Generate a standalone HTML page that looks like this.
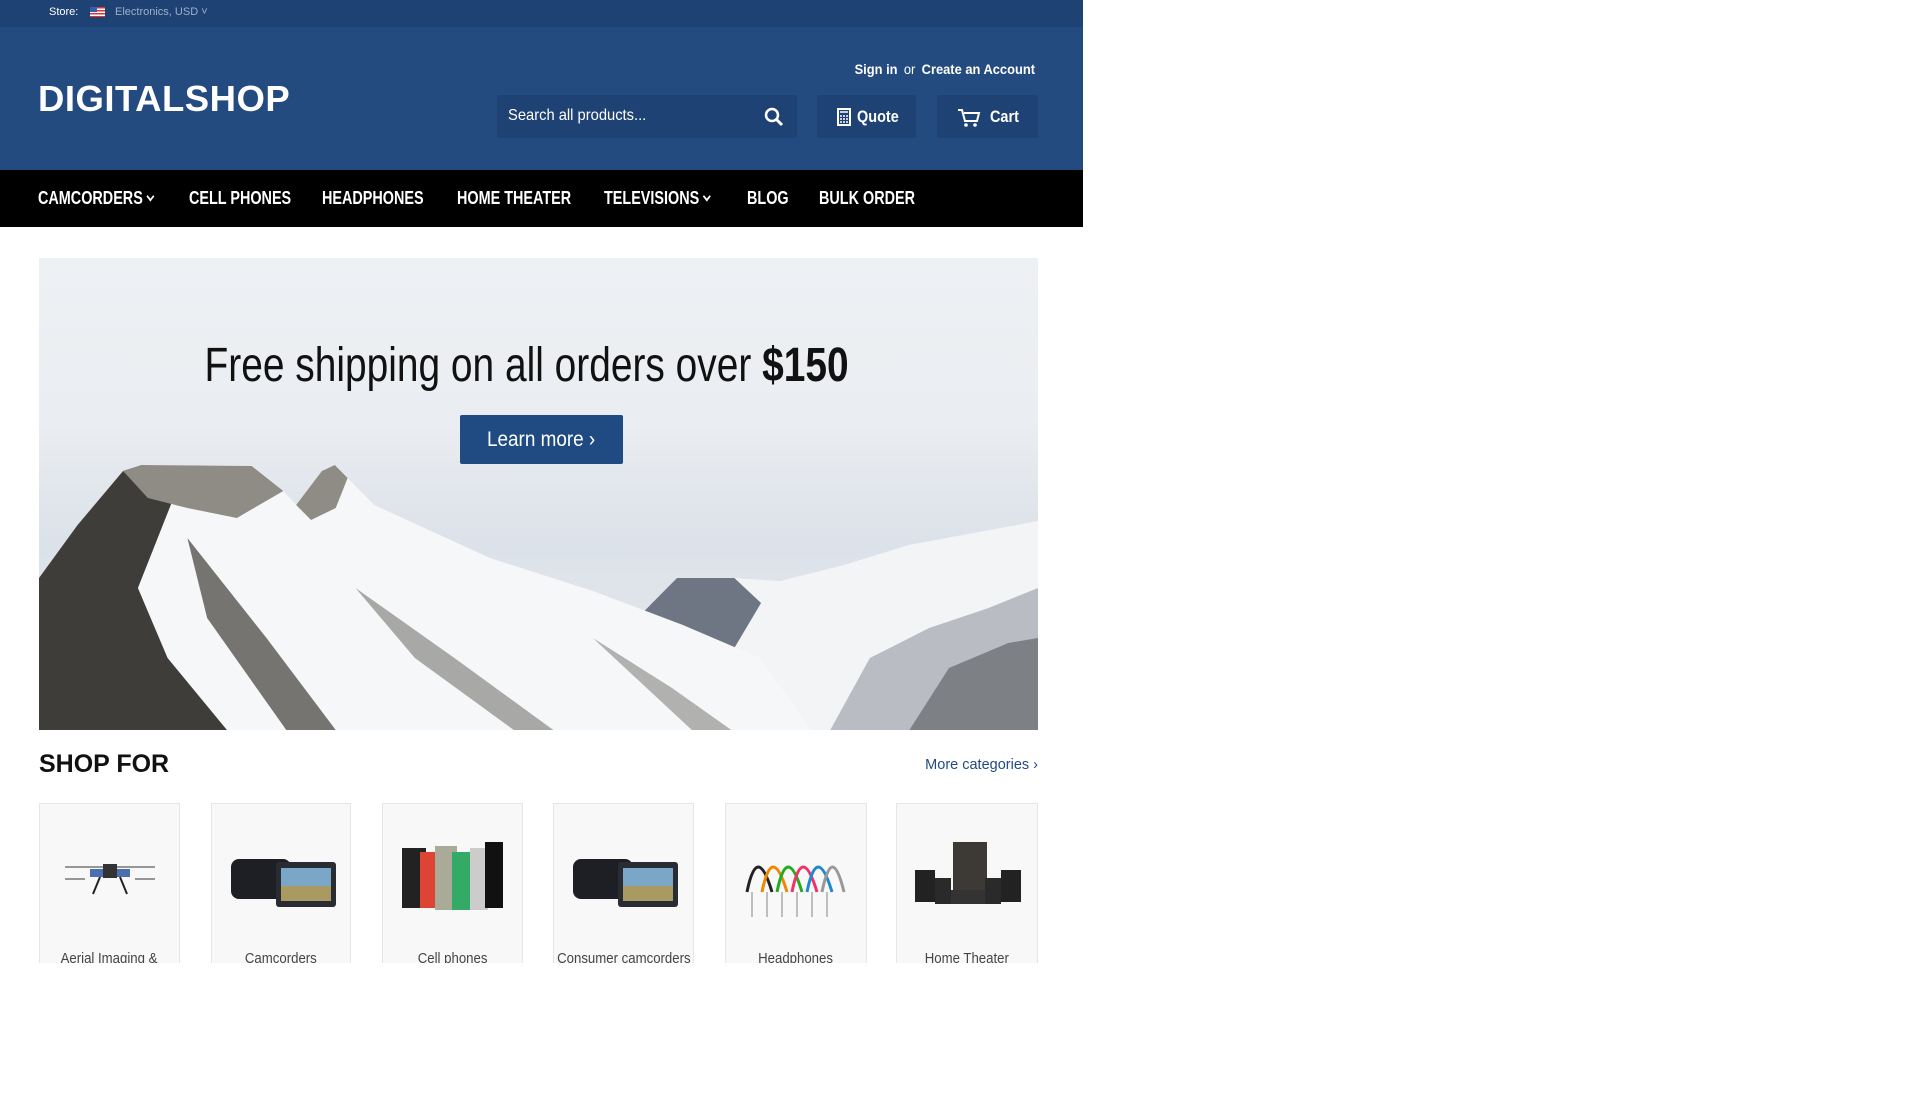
<!DOCTYPE html>
<html><head><meta charset="utf-8"><style>
*{margin:0;padding:0;box-sizing:border-box}
body{width:1920px;height:1106px;background:#fff;font-family:"Liberation Sans",sans-serif;overflow:hidden;position:relative}
.a{position:absolute}
.top{left:0;top:0;width:1083px;height:27px;background:#1f4274}
.hdr{left:0;top:27px;width:1083px;height:143px;background:#234b80}
.nav{left:0;top:170px;width:1083px;height:57px;background:#000}
.nav span{position:absolute;top:18px;color:#fff;font-weight:bold;font-size:18px;transform:scaleX(0.8);transform-origin:left;white-space:nowrap}
.chev{display:inline-block;width:7px;height:7px;border-right:2px solid #fff;border-bottom:2px solid #fff;transform:rotate(45deg);margin-left:6px;position:relative;top:-4px}
.btn{background:#1f4274;border-radius:2px;color:#fff;font-size:17px}
.card{top:803px;height:160px;background:#f8f8f8;border:1px solid #e6e6e6;border-bottom:none;overflow:hidden}
.card div{position:absolute;top:146px;left:-20px;right:-20px;text-align:center;white-space:nowrap}
.card div span{display:inline-block;font-size:15px;color:#444;transform:scaleX(0.88)}
</style></head><body>
<div class="a top"></div>
<div class="a" style="left:49px;top:6px;font-size:11px;color:#fff">Store:</div>
<div class="a" style="left:90px;top:7px;width:15px;height:10px;background:repeating-linear-gradient(#d33 0 1.5px,#fff 1.5px 3px)"><div style="width:7px;height:5px;background:#3a5bb0"></div></div>
<div class="a" style="left:115px;top:6px;font-size:11px;color:#9fb0c8">Electronics, USD ˅</div>
<div class="a hdr"></div>
<div class="a" style="left:38px;top:78px;font-weight:bold;font-size:36.5px;color:#fff;letter-spacing:0.5px">DIGITALSHOP</div>
<div class="a" style="left:780px;width:255px;text-align:right;top:61px;font-size:14px;color:#fff;font-weight:bold;transform:scaleX(0.92);transform-origin:right">Sign in <span style="font-weight:normal;margin:0 3px">or</span> Create an Account</div>
<div class="a btn" style="left:497px;top:95px;width:300px;height:43px"><span style="position:absolute;left:11px;top:12px;font-size:16px;transform:scaleX(0.92);transform-origin:left;white-space:nowrap">Search all products...</span>
<svg style="position:absolute;right:13px;top:12px" width="20" height="20" viewBox="0 0 20 20"><circle cx="8" cy="8" r="6" fill="none" stroke="#fff" stroke-width="2.5"/><path d="M12 12l6 6" stroke="#fff" stroke-width="3"/></svg></div>
<div class="a btn" style="left:817px;top:95px;width:99px;height:43px"><svg style="position:absolute;left:20px;top:13px" width="14" height="18" viewBox="0 0 14 18"><rect x="1" y="1" width="12" height="16" fill="none" stroke="#fff" stroke-width="2"/><path d="M3 4h8M3 8h2M6 8h2M9 8h2M3 11h2M6 11h2M9 11h2M3 14h2M6 14h2M9 14h2" stroke="#fff" stroke-width="1.5"/></svg><span style="position:absolute;left:40px;top:12px;font-weight:bold;transform:scaleX(0.85);transform-origin:left">Quote</span></div>
<div class="a btn" style="left:937px;top:95px;width:101px;height:43px"><svg style="position:absolute;left:20px;top:13px" width="24" height="20" viewBox="0 0 24 20"><path d="M1 2h4l3 11h12l2-8H7" fill="none" stroke="#fff" stroke-width="2"/><circle cx="9" cy="17" r="1.8" fill="#fff"/><circle cx="18" cy="17" r="1.8" fill="#fff"/></svg><span style="position:absolute;left:53px;top:12px;font-weight:bold;transform:scaleX(0.85);transform-origin:left">Cart</span></div>
<div class="a nav">
<span style="left:38px">CAMCORDERS<i class="chev"></i></span><span style="left:189px">CELL PHONES</span><span style="left:322px">HEADPHONES</span><span style="left:457px">HOME THEATER</span><span style="left:604px">TELEVISIONS<i class="chev"></i></span><span style="left:747px">BLOG</span><span style="left:819px">BULK ORDER</span></div>
<div class="a" style="left:39px;top:258px;width:999px;height:472px;overflow:hidden;background:linear-gradient(#eef1f4,#eaedf1 35%,#dce2e9 60%,#e6eaef)">
<svg width="999" height="472" viewBox="0 0 1010 472" preserveAspectRatio="none" style="position:absolute;left:0;top:0">
<path d="M560 472 L612 353 L645 320 L703 320 L749 323 L814 307 L879 287 L1010 263 L1010 472Z" fill="#f2f4f6"/>
<path d="M612 353 L645 320 L703 320 L730 345 L700 395 L660 400Z" fill="#6e7683"/>
<path d="M800 472 L840 400 L900 370 L960 350 L1010 330 L1010 472Z" fill="#8a9099" opacity="0.55"/>
<path d="M0 320 L39 267 L85 213 L104 207 L215 208 L247 233 L260 247 L286 213 L299 207 L312 220 L339 247 L456 300 L560 333 L651 367 L729 400 L781 472 L0 472Z" fill="#f6f7f8"/>
<path d="M0 320 L39 267 L85 213 L104 207 L140 230 L120 280 L100 330 L130 400 L190 472 L0 472Z" fill="#3f3d3a"/>
<path d="M85 213 L104 207 L215 208 L247 233 L200 260 L150 250 L110 240Z" fill="#8f8c86"/>
<path d="M260 247 L286 213 L299 207 L312 220 L300 250 L275 262Z" fill="#8f8c86"/>
<path d="M150 280 L230 380 L300 472 L250 472 L170 360Z" fill="#4a4844" opacity="0.75"/>
<path d="M320 330 L420 400 L520 472 L480 472 L380 400Z" fill="#4a4844" opacity="0.45"/>
<path d="M560 380 L640 430 L700 472 L660 472Z" fill="#4a4844" opacity="0.4"/>
<path d="M880 472 L920 410 L980 385 L1010 380 L1010 472Z" fill="#55595e" opacity="0.6"/>
</svg>
<div style="position:absolute;left:-100px;right:-76px;top:80px;text-align:center;white-space:nowrap"><span style="display:inline-block;font-size:48px;color:#111;transform:scaleX(0.81)">Free shipping on all orders over <b>$150</b></span></div>
<div style="position:absolute;left:421px;top:157px;width:163px;height:49px;background:#1f4a82;color:#fff;text-align:center;line-height:49px;border-radius:2px"><span style="display:inline-block;font-size:21px;transform:scaleX(0.9)">Learn more ›</span></div>
</div>
<div class="a" style="left:39px;top:750px;font-weight:bold;font-size:25px;color:#111">SHOP FOR</div>
<div class="a" style="left:866px;top:757px;width:172px;text-align:right;font-size:14.5px;color:#234b80">More categories ›</div>
<div class="a card" style="left:39px;width:141px"><svg style="position:absolute;left:15px;top:45px" width="110" height="50"><path d="M10 18h40M60 18h40M10 30h20M80 30h20" stroke="#777" stroke-width="1.5"/><rect x="35" y="20" width="40" height="8" fill="#4a6fb0"/><path d="M45 28 L38 45 M65 28 L72 45" stroke="#222" stroke-width="2"/><rect x="48" y="15" width="14" height="14" fill="#333"/></svg><div><span>Aerial Imaging &amp;</span></div></div>
<div class="a card" style="left:211px;width:140px"><svg style="position:absolute;left:14px;top:40px" width="115" height="70"><rect x="5" y="15" width="60" height="40" rx="8" fill="#1e1f24"/><rect x="50" y="18" width="60" height="45" rx="3" fill="#2a2c33"/><rect x="55" y="24" width="50" height="33" fill="#7aa6c8"/><rect x="55" y="42" width="50" height="15" fill="#a99a62"/></svg><div><span>Camcorders</span></div></div>
<div class="a card" style="left:382px;width:141px"><svg style="position:absolute;left:17px;top:38px" width="110" height="70"><rect x="2" y="6" width="24" height="60" fill="#222"/><rect x="20" y="10" width="22" height="56" fill="#d43"/><rect x="35" y="4" width="22" height="64" fill="#aa9"/><rect x="52" y="10" width="22" height="58" fill="#3a6"/><rect x="70" y="6" width="18" height="62" fill="#ccc"/><rect x="85" y="0" width="18" height="66" fill="#111"/></svg><div><span>Cell phones</span></div></div>
<div class="a card" style="left:553px;width:141px"><svg style="position:absolute;left:14px;top:40px" width="115" height="70"><rect x="5" y="15" width="60" height="40" rx="8" fill="#1e1f24"/><rect x="50" y="18" width="60" height="45" rx="3" fill="#2a2c33"/><rect x="55" y="24" width="50" height="33" fill="#7aa6c8"/><rect x="55" y="42" width="50" height="15" fill="#a99a62"/></svg><div><span>Consumer camcorders</span></div></div>
<div class="a card" style="left:725px;width:142px"><svg style="position:absolute;left:16px;top:38px" width="110" height="80"><g fill="none" stroke-width="3"><path d="M5 50 Q15 0 30 50" stroke="#222"/><path d="M20 50 Q30 0 45 50" stroke="#e80"/><path d="M35 50 Q45 0 60 50" stroke="#2a2"/><path d="M50 50 Q60 0 75 50" stroke="#e36"/><path d="M65 50 Q75 0 90 50" stroke="#28c"/><path d="M80 50 Q90 0 102 50" stroke="#999"/></g><g stroke-width="1.5"><path d="M10 50v25M25 50v25M40 50v25M55 50v25M70 50v25M85 50v25" stroke="#aaa"/></g></svg><div><span>Headphones</span></div></div>
<div class="a card" style="left:896px;width:142px"><svg style="position:absolute;left:16px;top:38px" width="110" height="70"><rect x="40" y="0" width="34" height="60" fill="#3d3934"/><rect x="2" y="28" width="20" height="32" fill="#222"/><rect x="88" y="28" width="20" height="32" fill="#222"/><rect x="22" y="36" width="16" height="26" fill="#2a2a2a"/><rect x="72" y="36" width="16" height="26" fill="#2a2a2a"/><rect x="38" y="48" width="34" height="14" fill="#333"/></svg><div><span>Home Theater</span></div></div>
</body></html>
